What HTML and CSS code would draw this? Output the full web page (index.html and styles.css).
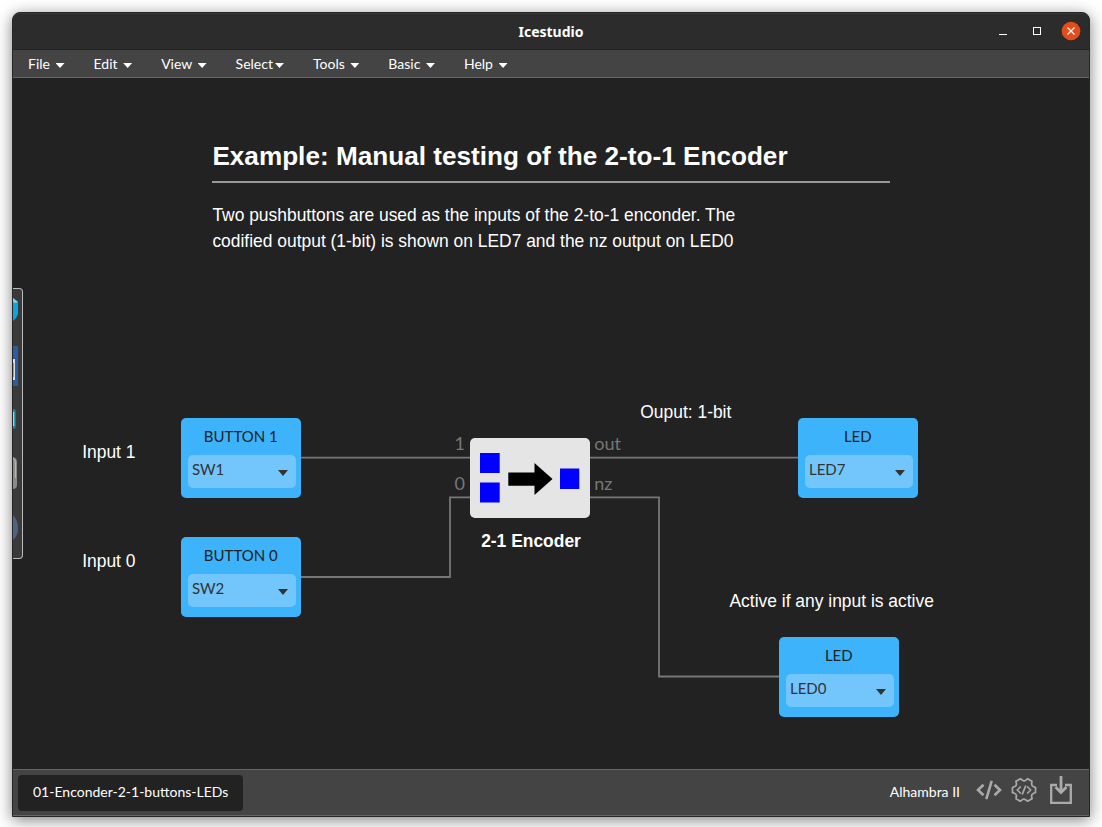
FILE: index.html
```html
<!DOCTYPE html>
<html lang="en">
<head>
<meta charset="utf-8">
<title>Icestudio</title>
<link rel="stylesheet" href="styles.css">
</head>
<body>
<div class="window">
  <header class="titlebar">
    <span class="title">Icestudio</span>
    <div class="controls">
      <svg width="12" height="12" viewBox="0 0 12 12"><path d="M2 8.500h8" stroke="#fff"/></svg>
      <svg width="12" height="12" viewBox="0 0 12 12"><rect x="2.500" y="1.500" width="7" height="7" fill="none" stroke="#fff"/></svg>
      <svg class="close" width="20" height="20" viewBox="0 0 20 20"><circle cx="10" cy="10" r="9.300" fill="#e64c19"/><path d="M6.500 6.500l7 7M13.500 6.500l-7 7" stroke="#fff" stroke-width="1.300"/></svg>
    </div>
  </header>
  <nav class="menu">
    <a class="item">File <i class="caret"></i></a>
    <a class="item">Edit <i class="caret"></i></a>
    <a class="item">View <i class="caret"></i></a>
    <a class="item">Select<i class="caret"></i></a>
    <a class="item">Tools <i class="caret"></i></a>
    <a class="item">Basic <i class="caret"></i></a>
    <a class="item">Help <i class="caret"></i></a>
  </nav>
  <main class="canvas">
    <svg class="wires" width="1076" height="691" viewBox="13 78 1076 691">
      <g fill="none" stroke="#777" stroke-width="1.800">
        <path d="M300 457.700H470M300 577H450V497.300H470M589 457.700H799M589 497.300H659V676.500H780"/>
      </g>
    </svg>

    <aside class="toolbox">
      <svg width="9" height="269" viewBox="0 0 9 269">
        <path d="M0 9l5 4v12q-1 4-5 7z" fill="#0aa5e0"/><path d="M0 9l5 4-3 1-2-1z" fill="#79d2f2"/>
        <path d="M0 57h5v40H0z" fill="#2a5da8"/><path d="M0 70h2v21H0z" fill="#ddd"/><path d="M0 74h1v14H0z" fill="#999"/>
        <path d="M0 120q2.700 0 2.700 3v14q0 3-2.700 3z" fill="#1e8ba0"/><path d="M0 123h1.200v14H0z" fill="#8de0ee"/>
        <path d="M0 168q4 1 4 5v23q0 4-4 4z" fill="#8b8b85"/><path d="M0 169q2.500 1 2.500 5v15" fill="none" stroke="#b8b8b2"/>
        <path d="M0 226q5 5 5 13t-5 12z" fill="#4b6487"/>
      </svg>
    </aside>

    <section class="info">
      <h1>Example: Manual testing of the 2-to-1 Encoder</h1>
      <p>Two pushbuttons are used as the inputs of the 2-to-1 enconder. The codified output (1-bit) is shown on LED7 and the nz output on LED0</p>
    </section>

    <span class="note n-in1">Input 1</span>
    <span class="note n-in0">Input 0</span>
    <span class="note n-out">Ouput: 1-bit</span>
    <span class="note n-act">Active if any input is active</span>

    <div class="block b-sw1"><span class="label">BUTTON 1</span><div class="select">SW1<i class="arrow"></i></div></div>
    <div class="block b-sw2"><span class="label">BUTTON 0</span><div class="select">SW2<i class="arrow"></i></div></div>
    <div class="block b-led7"><span class="label">LED</span><div class="select">LED7<i class="arrow"></i></div></div>
    <div class="block b-led0"><span class="label">LED</span><div class="select">LED0<i class="arrow"></i></div></div>

    <div class="encoder">
      <svg width="119" height="79" viewBox="0 0 119 79">
        <path d="M10 15h19.700v20H10zM10 44.500h19.700v20H10zM90 30.500h19.300v20.500H90z" fill="#00f"/>
        <path d="M38.300 34.500H64.500V25L82.500 41 64.500 57V47.800H38.300z"/>
      </svg>
    </div>
    <span class="port p-1">1</span>
    <span class="port p-0">0</span>
    <span class="port p-out">out</span>
    <span class="port p-nz">nz</span>
    <span class="note n-enc">2-1 Encoder</span>
  </main>
  <footer class="footer">
    <span class="tab">01-Enconder-2-1-buttons-LEDs</span>
    <div class="status">
      <span class="board">Alhambra II</span>
      <svg class="code" width="26" height="20" viewBox="0 0 26 20" fill="none" stroke="#aaa" stroke-width="2.600"><path d="M7.500 4.700L2 10l5.500 5.300M18.500 4.700l5.500 5.300-5.500 5.300M15.700 .8L10.300 19.200"/></svg>
      <svg class="gear" width="26" height="26" viewBox="0 0 26 26" fill="none" stroke="#aaa" stroke-width="1.700" stroke-linejoin="round" stroke-linecap="round">
        <defs><path id="lobe" d="M24.500 10.500V15.500L22.200 16.500Q20.300 17.400 20.600 19.200L20.900 21.700"/></defs>
        <use href="#lobe"/>
        <use href="#lobe" transform="rotate(60 13 13)"/>
        <use href="#lobe" transform="rotate(120 13 13)"/>
        <use href="#lobe" transform="rotate(180 13 13)"/>
        <use href="#lobe" transform="rotate(240 13 13)"/>
        <use href="#lobe" transform="rotate(300 13 13)"/>
        <path d="M9.300 10L6.300 13l3 3M16.700 10l3 3-3 3M14.600 9.200l-3.200 7.600"/>
      </svg>
      <svg class="load" width="22" height="28" viewBox="0 0 22 28" fill="none" stroke="#aaa"><path d="M7 9H1.200V26.800H20.800V9H15" stroke-width="2.300"/><path d="M11 0V16M5.500 11L11 16.500 16.500 11" stroke-width="2.800"/></svg>
    </div>
  </footer>
</div>
</body>
</html>
```
FILE: styles.css
```css
* { box-sizing: border-box; }
body { margin: 0; height: 827px; padding: 12px; overflow: hidden; background: #fff; font-family: Lato, sans-serif; color: #fff; }
.window { width: 1078px; height: 805px; display: flex; flex-direction: column; border: 1px solid #272727; border-radius: 8px 8px 0 0; background: #222; box-shadow: 0 3px 15px rgba(0,0,0,.5); }
.titlebar { height: 37px; flex: none; display: grid; grid-template-columns: 1fr auto 1fr; align-items: center; background: #2c2c2c; border-top: 1px solid #383838; border-bottom: 1px solid #232323; border-radius: 7px 7px 0 0; }
.title { grid-column: 2; font: bold 14px "Noto Sans", sans-serif; }
.controls { display: flex; align-items: center; justify-content: flex-end; gap: 22px; padding-right: 8px; }
.close { margin: -1px 0 0 -4px; }
.menu { height: 28px; flex: none; display: flex; background: #444; border-bottom: 1px solid #666; }
.item { padding: 0 15px; font-size: 14px; line-height: 28px; white-space: nowrap; }
.caret { display: inline-block; width: 9px; height: 5px; margin: 0 -1px 0 2px; vertical-align: middle; background: #fff; clip-path: polygon(0 0, 100% 0, 50% 100%); }
.canvas { position: relative; flex: 1; overflow: hidden; background: #222; }
.wires { position: absolute; left: 0; top: 0; }
.toolbox { position: absolute; left: 0; top: 210px; width: 10px; height: 271px; background: #3a3a3a; border: 1px solid #bbb; border-left: 0; border-radius: 0 4px 4px 0; }
.toolbox svg { display: block; }
.info { position: absolute; left: 199.400px; top: 62px; width: 677.400px; font-family: "Liberation Sans", Arial, sans-serif; }
.info h1 { margin: 0; height: 43px; font-size: 26.150px; line-height: 33px; border-bottom: 2px solid #999; white-space: nowrap; }
.info p { margin: 19px 0 0; width: 545px; font-size: 17.430px; line-height: 26px; }
.note { position: absolute; font: 17.430px/26px "Liberation Sans", Arial, sans-serif; white-space: nowrap; }
.n-in1 { left: 69.200px; top: 361px; }
.n-in0 { left: 69.200px; top: 470px; }
.n-out { left: 627.300px; top: 321px; }
.n-act { left: 716.500px; top: 510px; }
.n-enc { left: 458px; width: 120px; top: 450px; text-align: center; font-weight: bold; }
.block { position: absolute; width: 119.600px; height: 79.600px; padding: 7px 5px 0 7px; display: flex; flex-direction: column; border-radius: 5px; background: #3db3fb; color: #222; font-size: 15px; }
.label { height: 30px; line-height: 22px; text-align: center; padding-right: 2px; }
.select { height: 33px; padding: 0 8px 0 4px; display: flex; justify-content: space-between; line-height: 28px; color: #333; background: #72c6fc; border-radius: 5px; }
.arrow { align-self: flex-start; margin-top: 15px; border: 5px solid transparent; border-top: 6px solid #333; border-bottom: 0; }
.b-sw1 { left: 168px; top: 340px; }
.b-sw2 { left: 168px; top: 459px; }
.b-led7 { left: 785px; top: 340px; }
.b-led0 { left: 766px; top: 559px; }
.encoder { position: absolute; left: 457px; top: 360px; width: 119.600px; height: 79.600px; border-radius: 5px; background: #e5e5e5; }
.encoder svg { display: block; }
.port { position: absolute; font-size: 18px; line-height: 24px; color: #777; }
.p-1 { left: 441.500px; top: 353px; }
.p-0 { left: 441.500px; top: 393px; }
.p-out { left: 581.300px; top: 353px; }
.p-nz { left: 581.300px; top: 393px; }
.footer { height: 47px; flex: none; display: flex; align-items: center; justify-content: space-between; padding: 0 17px 0 5px; background: #444; border-top: 1px solid #666; border-bottom: 1px solid #666; }
.tab { height: 36px; padding: 0 15px; line-height: 34px; font-size: 14px; background: #222; border-radius: 4px; }
.status { display: flex; align-items: center; }
.board { font-size: 14px; line-height: 20px; margin: -2px 16px 0 0; }
.code { margin: -6px 9px 0 0; }
.gear { margin: -6px 13px 0 0; }
.load { margin-top: -6px; }
```
